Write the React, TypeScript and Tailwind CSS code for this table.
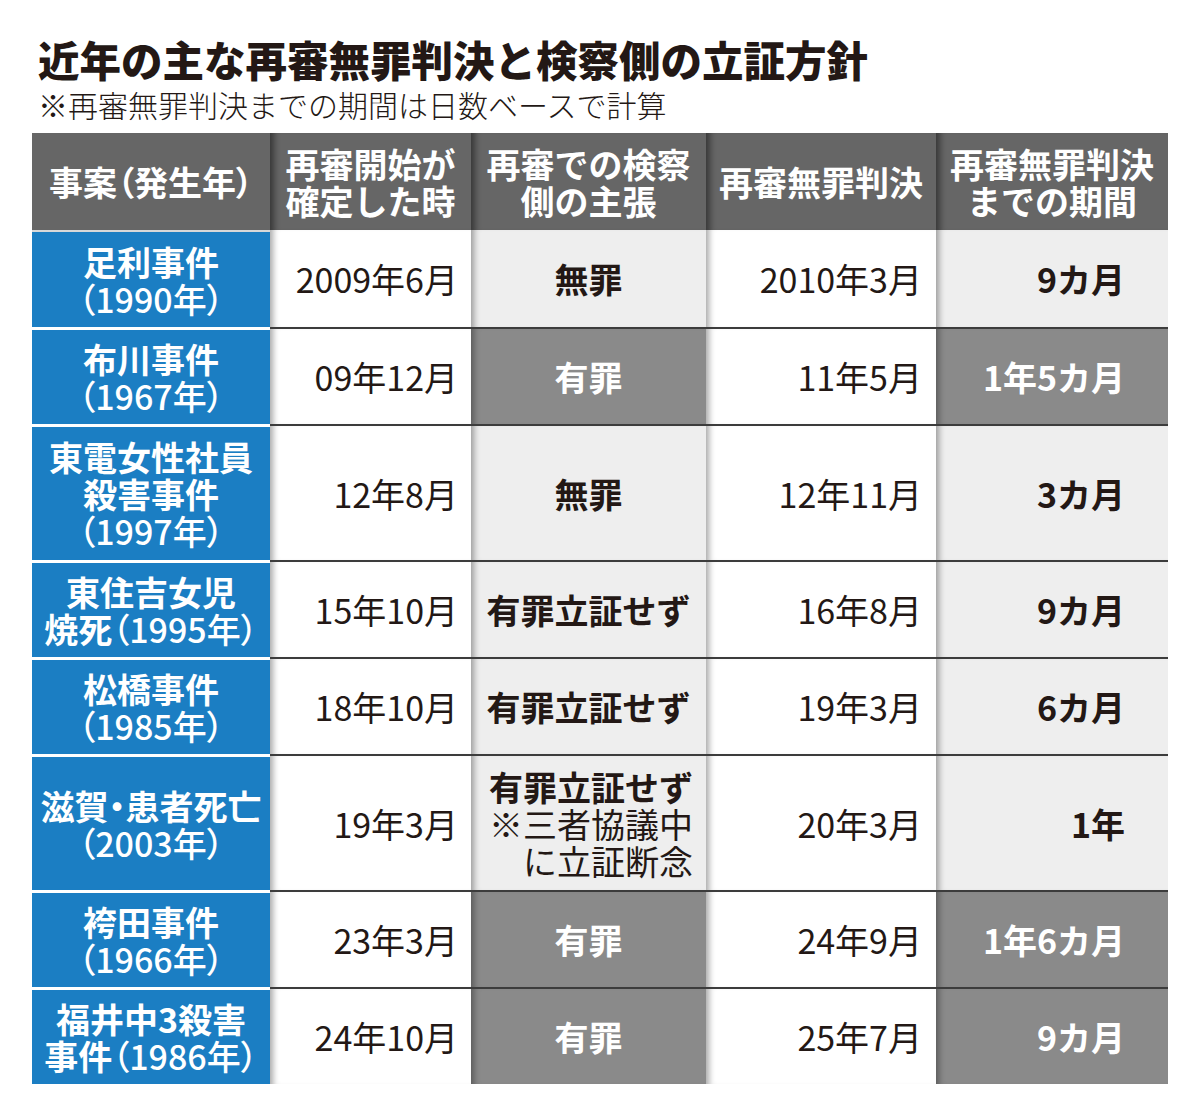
import React from "react";

type Row = {
  name: React.ReactNode;
  start: string;
  claim: React.ReactNode;
  claimDark?: boolean;
  claimRight?: boolean;
  verdict: string;
  period: string;
  tall?: boolean;
};

const Y = ({ t }: { t: string }) => <span className="font-medium">{t}</span>;

const rows: Row[] = [
  {
    name: (
      <>
        <div>足利事件</div>
        <div className="font-medium">（1990年）</div>
      </>
    ),
    start: "2009年6月",
    claim: "無罪",
    verdict: "2010年3月",
    period: "9カ月",
  },
  {
    name: (
      <>
        <div>布川事件</div>
        <div className="font-medium">（1967年）</div>
      </>
    ),
    start: "09年12月",
    claim: "有罪",
    claimDark: true,
    verdict: "11年5月",
    period: "1年5カ月",
  },
  {
    name: (
      <>
        <div>東電女性社員</div>
        <div>殺害事件</div>
        <div className="font-medium">（1997年）</div>
      </>
    ),
    start: "12年8月",
    claim: "無罪",
    verdict: "12年11月",
    period: "3カ月",
    tall: true,
  },
  {
    name: (
      <>
        <div>東住吉女児</div>
        <div>
          焼死<Y t="（1995年）" />
        </div>
      </>
    ),
    start: "15年10月",
    claim: "有罪立証せず",
    verdict: "16年8月",
    period: "9カ月",
  },
  {
    name: (
      <>
        <div>松橋事件</div>
        <div className="font-medium">（1985年）</div>
      </>
    ),
    start: "18年10月",
    claim: "有罪立証せず",
    verdict: "19年3月",
    period: "6カ月",
  },
  {
    name: (
      <>
        <div>滋賀・患者死亡</div>
        <div className="font-medium">（2003年）</div>
      </>
    ),
    start: "19年3月",
    claim: (
      <>
        <div className="font-bold">有罪立証せず</div>
        <div className="font-normal [font-feature-settings:'palt']">※三者協議中</div>
        <div className="font-normal">に立証断念</div>
      </>
    ),
    claimRight: true,
    verdict: "20年3月",
    period: "1年",
    tall: true,
  },
  {
    name: (
      <>
        <div>袴田事件</div>
        <div className="font-medium">（1966年）</div>
      </>
    ),
    start: "23年3月",
    claim: "有罪",
    claimDark: true,
    verdict: "24年9月",
    period: "1年6カ月",
  },
  {
    name: (
      <>
        <div>福井中3殺害</div>
        <div>
          事件<Y t="（1986年）" />
        </div>
      </>
    ),
    start: "24年10月",
    claim: "有罪",
    claimDark: true,
    verdict: "25年7月",
    period: "9カ月",
  },
];

const shadow = "shadow-[inset_8px_0_6px_-5px_rgba(0,0,0,0.35)]";
const hshadow = "shadow-[inset_9px_0_6px_-5px_rgba(0,0,0,0.45)]";

export default function App() {
  return (
    <div className="w-[1200px] h-[1118px] bg-white font-['Noto_Sans_CJK_JP',sans-serif] text-[#231815] px-[32px]">
      <div className="pt-[35px] pl-[6px] text-[41.5px] leading-[48px] font-black">
        近年の主な再審無罪判決と検察側の立証方針
      </div>
      <div className="pl-[6px] mt-[1px] text-[30px] leading-[40px] font-light">
        ※再審無罪判決までの期間は日数ベースで計算
      </div>
      <div className="mt-[9px] w-[1136px] flex flex-col">
        <div className="flex h-[97px] bg-[#666666] text-white font-bold text-[34px] leading-[37px] text-center">
          <div className="w-[238px] flex items-center justify-center [font-feature-settings:'palt']">
            事案（発生年）
          </div>
          <div className={`w-[201px] flex flex-col items-center justify-center ${hshadow}`}>
            <div>再審開始が</div>
            <div>確定した時</div>
          </div>
          <div className={`w-[235px] flex flex-col items-center justify-center ${hshadow}`}>
            <div>再審での検察</div>
            <div>側の主張</div>
          </div>
          <div className={`w-[230px] flex flex-col items-center justify-center ${hshadow}`}>
            <div>再審無罪判決</div>
          </div>
          <div className={`w-[232px] flex flex-col items-center justify-center ${hshadow}`}>
            <div>再審無罪判決</div>
            <div>までの期間</div>
          </div>
        </div>
        {rows.map((r, i) => (
          <div
            key={i}
            className={`flex ${r.tall ? "h-[136px]" : "h-[97px]"} text-[34px] leading-[37px]`}
          >
            <div
              className={`w-[238px] bg-[#1b7ec3] text-white font-bold flex flex-col items-center justify-center text-center [font-feature-settings:'palt'] ${
                i === 0 ? "border-t-[2px] border-[#d8d8d8]" : "border-t-[3px] border-white"
              }`}
            >
              {r.name}
            </div>
            <div
              className={`w-[201px] bg-white flex items-center justify-end pr-[13px] font-normal ${shadow} ${
                i === 0 ? "" : "border-t-[2px] border-[#3c3c3c]"
              }`}
            >
              {r.start}
            </div>
            <div
              className={`w-[235px] flex flex-col justify-center ${shadow} ${
                r.claimDark ? "bg-[#8a8a8a] text-white" : "bg-[#eeeeee]"
              } ${r.claimRight ? "items-end pr-[13px] text-right" : "items-center"} font-bold ${
                i === 0 ? "" : "border-t-[2px] border-[#3c3c3c]"
              }`}
            >
              {r.claim}
            </div>
            <div
              className={`w-[230px] bg-white flex items-center justify-end pr-[14px] font-normal ${shadow} ${
                i === 0 ? "" : "border-t-[2px] border-[#3c3c3c]"
              }`}
            >
              {r.verdict}
            </div>
            <div
              className={`w-[232px] flex items-center justify-end pr-[43px] font-bold ${shadow} ${
                r.claimDark ? "bg-[#8a8a8a] text-white" : "bg-[#eeeeee]"
              } ${i === 0 ? "" : "border-t-[2px] border-[#3c3c3c]"}`}
            >
              {r.period}
            </div>
          </div>
        ))}
      </div>
    </div>
  );
}
